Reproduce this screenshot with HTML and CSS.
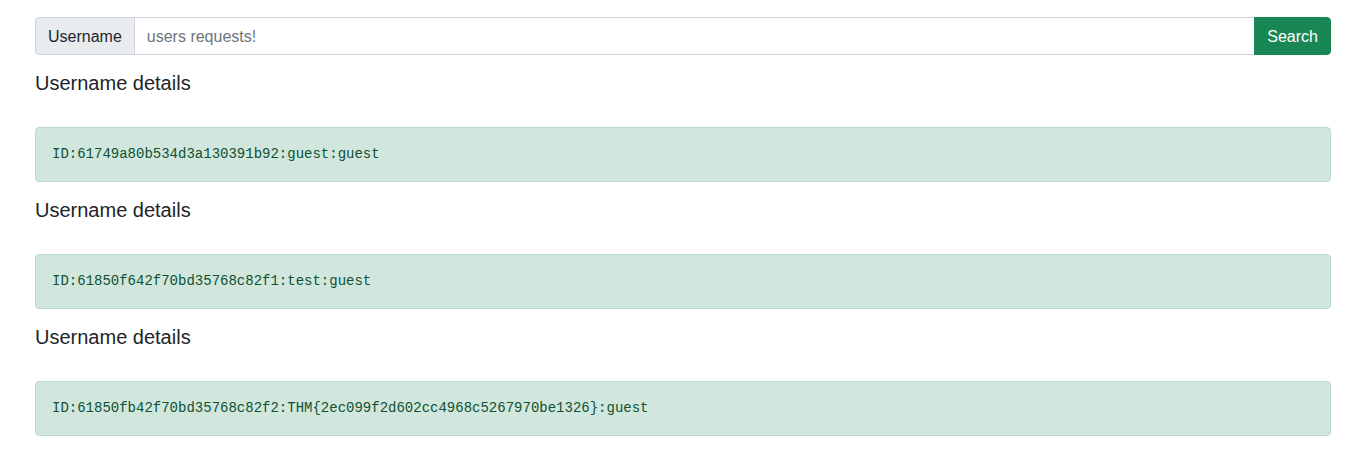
FILE: index.html
```html
<!DOCTYPE html>
<html lang="en">
<head>
<meta charset="utf-8">
<title>Users</title>
<link rel="stylesheet" href="styles.css">
</head>
<body>
<div class="page">
  <form class="input-group">
    <span class="input-group-text">Username</span>
    <input class="form-control" type="text" placeholder="users requests!">
    <button class="btn-search" type="button">Search</button>
  </form>
  <div class="entry">
    <h5 class="title">Username details</h5>
    <div class="alert"><code>ID:61749a80b534d3a130391b92:guest:guest</code></div>
  </div>
  <div class="entry">
    <h5 class="title">Username details</h5>
    <div class="alert"><code>ID:61850f642f70bd35768c82f1:test:guest</code></div>
  </div>
  <div class="entry">
    <h5 class="title">Username details</h5>
    <div class="alert"><code>ID:61850fb42f70bd35768c82f2:THM{2ec099f2d602cc4968c5267970be1326}:guest</code></div>
  </div>
</div>
</body>
</html>
```
FILE: styles.css
```css
* { box-sizing: border-box; }
html, body { margin: 0; padding: 0; background: #fff; }
body {
  font-family: "Liberation Sans", Arial, sans-serif;
  font-size: 16px;
  line-height: 1.5;
  color: #212529;
}
.page {
  padding: 17px 33px 0 35px;
}
.input-group {
  display: flex;
  align-items: stretch;
  height: 38px;
  margin: 0 0 16px 0;
}
.input-group-text {
  display: flex;
  align-items: center;
  padding: 7px 12px 5px;
  background: #e9ecef;
  border: 1px solid #ced4da;
  border-radius: 4px 0 0 4px;
  font-size: 16px;
  color: #212529;
  white-space: nowrap;
}
.form-control {
  flex: 1 1 auto;
  min-width: 0;
  margin-left: -1px;
  padding: 7px 12px 5px;
  border: 1px solid #ced4da;
  border-radius: 0;
  font-family: inherit;
  font-size: 16px;
  color: #212529;
  outline: none;
}
.form-control::placeholder { color: #6c757d; }
.btn-search {
  margin-left: -1px;
  padding: 7px 12px 5px;
  background: #198754;
  border: 1px solid #198754;
  border-radius: 0 4px 4px 0;
  color: #fff;
  font-family: inherit;
  font-size: 16px;
  line-height: 1.5;
}
.title {
  margin: 0 0 8px 0;
  font-size: 20px;
  font-weight: 500;
  line-height: 1.2;
  padding-bottom: 24px;
}
.alert {
  margin: 0 0 16px 0;
  padding: 16px;
  background: #d1e7dd;
  border: 1px solid #badbcc;
  border-radius: 4px;
  color: #0f5132;
}
.alert code {
  display: block;
  font-family: "Liberation Mono", "Courier New", monospace;
  font-size: 14px;
  line-height: 21px;
  color: #0f5132;
}
```
